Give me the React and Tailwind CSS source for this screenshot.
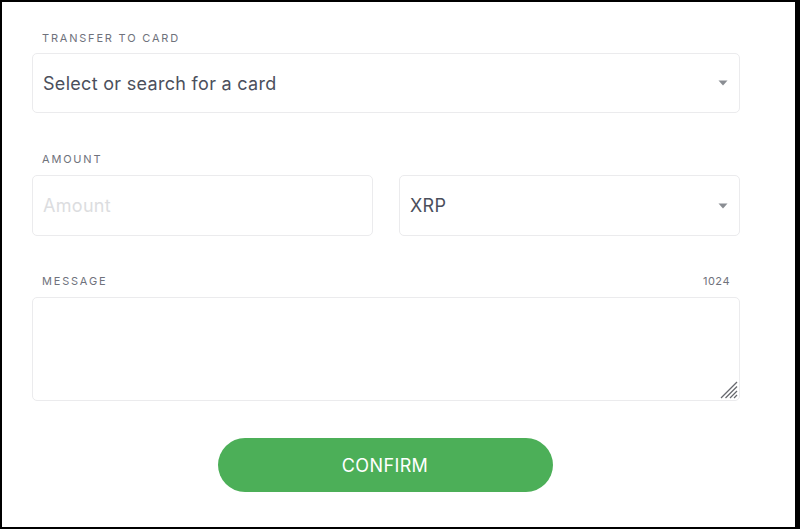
import React from "react";

function Caret() {
  return (
    <svg width="10" height="6" viewBox="0 0 10 6" className="shrink-0">
      <path d="M0.5 0.5 L9.5 0.5 L5 5.5 Z" fill="#8a8d93" />
    </svg>
  );
}

function Grip() {
  return (
    <svg width="18" height="18" viewBox="0 0 18 18" className="absolute right-[2px] bottom-[2px] pointer-events-none">
      <g stroke="#66686d" strokeWidth="1.2">
        <line x1="17" y1="1" x2="1" y2="17" />
        <line x1="17" y1="5.5" x2="5.5" y2="17" />
        <line x1="17" y1="10" x2="10" y2="17" />
        <line x1="17" y1="14" x2="14" y2="17" />
      </g>
    </svg>
  );
}

export default function App() {
  return (
    <div
      className="w-[800px] h-[529px] bg-white border-t-2 border-l-2 border-b-2 border-r-[5px] border-black overflow-hidden"
      style={{ fontFamily: "Inter, 'Open Sans', sans-serif" }}
    >
      <div className="pl-[30px] pt-[28px] w-[738px] flex flex-col">
        <div className="pl-[10px] text-[11px] leading-[16px] tracking-[1.8px] text-[#6f727c] uppercase">
          Transfer to card
        </div>
        <div className="mt-[7px] h-[60px] rounded-[5px] border border-[#ebebed] flex items-center justify-between pl-[10px] pr-[11px]">
          <span className="text-[18px] tracking-[0.3px] text-[#4b4f5c]">Select or search for a card</span>
          <Caret />
        </div>

        <div className="mt-[38px] pl-[10px] text-[11px] leading-[16px] tracking-[1.8px] text-[#6f727c] uppercase">
          Amount
        </div>
        <div className="mt-[8px] flex gap-[26px]">
          <div className="w-[341px] h-[61px] rounded-[5px] border border-[#ebebed] flex items-center pl-[10px]">
            <span className="text-[18px] tracking-[0.3px] text-[#dcdde0]">Amount</span>
          </div>
          <div className="w-[341px] h-[61px] rounded-[5px] border border-[#ebebed] flex items-center justify-between pl-[10px] pr-[11px]">
            <span className="text-[18px] tracking-[0.3px] text-[#4b4f5c]">XRP</span>
            <Caret />
          </div>
        </div>

        <div className="mt-[37px] flex justify-between items-center pl-[10px] pr-[10px] text-[11px] leading-[16px] text-[#6f727c]">
          <span className="tracking-[1.8px] uppercase">Message</span>
          <span className="tracking-[0.5px]">1024</span>
        </div>
        <div className="relative mt-[8px] h-[104px]">
          <textarea
            className="block w-full h-full rounded-[5px] border border-[#ebebed] resize-none outline-none p-[10px] text-[16px]"
            aria-label="Message"
          />
          <Grip />
        </div>

        <div className="mt-[37px] flex justify-center pr-[2px]">
          <button className="w-[335px] h-[54px] rounded-full bg-[#4caf58] text-white text-[18px] tracking-[0.4px]">
            CONFIRM
          </button>
        </div>
      </div>
    </div>
  );
}
